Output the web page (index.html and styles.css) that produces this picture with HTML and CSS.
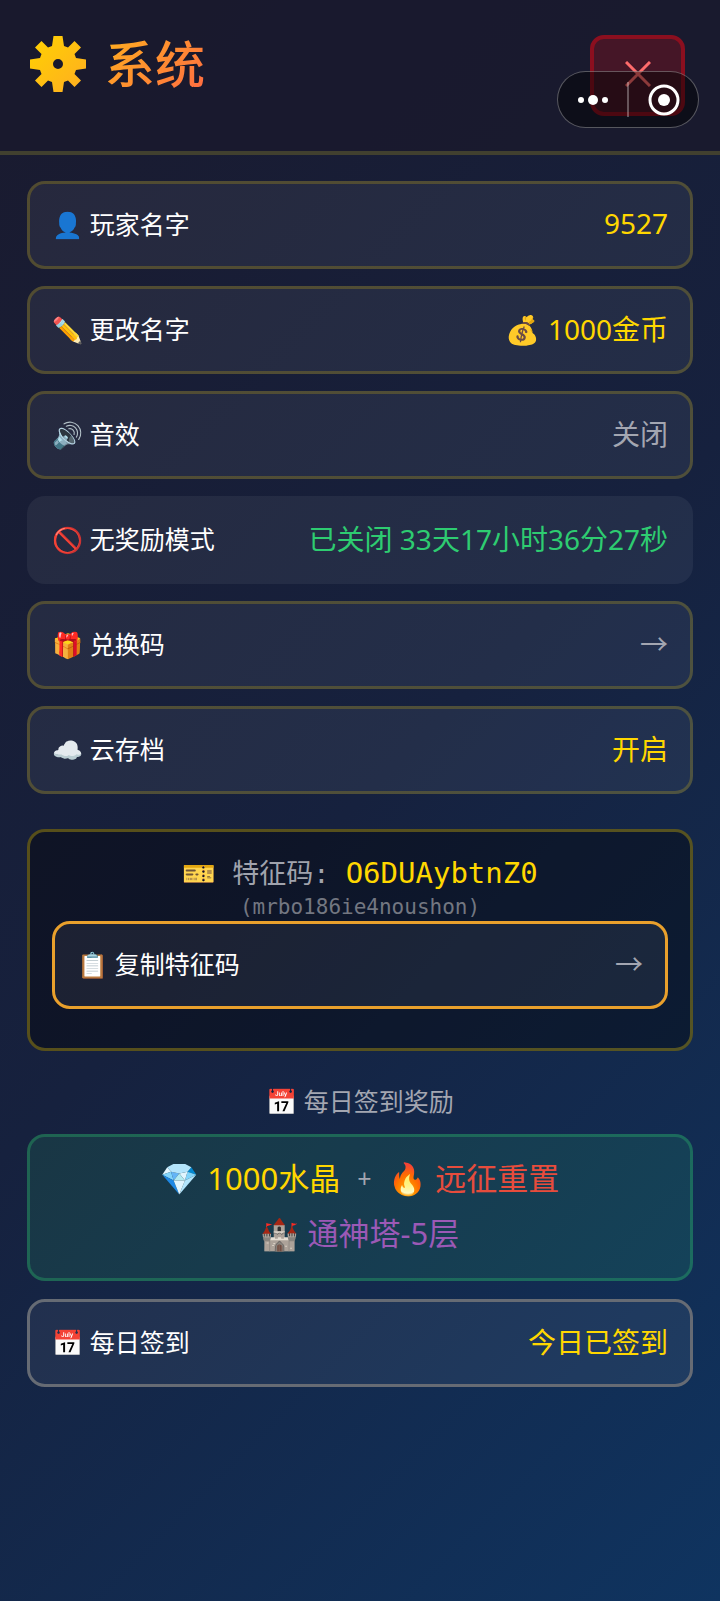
FILE: index.html
```
<!DOCTYPE html>
<html lang="zh-CN">
<head>
  <meta charset="UTF-8">
  <meta name="viewport" content="width=device-width, initial-scale=1.0">
  <title>系统</title>
  <link rel="stylesheet" href="styles.css">
</head>
<body>
  <header class="header">
    <h1 class="title">
      <svg class="gear" viewBox="-29 -29 58 58" aria-hidden="true">
        <defs>
          <linearGradient id="gold" x1="0" y1="0" x2="1" y2="1">
            <stop offset="0" stop-color="#ffd200"/>
            <stop offset="1" stop-color="#ffad22"/>
          </linearGradient>
        </defs>
        <path fill="url(#gold)" fill-rule="evenodd" d="M-4.5-28H4.5L6-18L10-16.500L16.500-23L23-16.500L16.500-10L18-6L28-4.500V4.500L18 6L16.500 10L23 16.500L16.500 23L10 16.500L6 18L4.500 28H-4.500L-6 18L-10 16.500L-16.500 23L-23 16.500L-16.500 10L-18 6L-28 4.500V-4.500L-18-6L-16.500-10L-23-16.500L-16.500-23L-10-16.500L-6-18ZM0-5A5 5 0 1 0 0 5A5 5 0 1 0 0-5Z"/>
      </svg>
      <span class="title-text">系统</span>
    </h1>
    <button class="close-btn" type="button" aria-label="关闭">
      <svg viewBox="0 0 26 26" width="26" height="26"><path d="M1 1L25 25M25 1L1 25" fill="none" stroke="#ff6b6b" stroke-width="3"/></svg>
    </button>
    <div class="capsule">
      <button type="button" aria-label="更多">
        <svg viewBox="0 0 30 12" width="30" height="12" fill="#fff"><circle cx="3" cy="6" r="3"/><circle cx="15" cy="6" r="5"/><circle cx="27" cy="6" r="3"/></svg>
      </button>
      <span class="divider"></span>
      <button type="button" aria-label="退出">
        <svg viewBox="0 0 32 32" width="32" height="32"><circle cx="16" cy="16" r="14" fill="none" stroke="#fff" stroke-width="3"/><circle cx="16" cy="16" r="6" fill="#fff"/></svg>
      </button>
    </div>
  </header>

  <main class="content">
    <div class="item">
      <span class="label">👤 玩家名字</span>
      <span class="value">9527</span>
    </div>
    <button class="item" type="button">
      <span class="label">✏️ 更改名字</span>
      <span class="value">💰 1000金币</span>
    </button>
    <button class="item" type="button">
      <span class="label">🔊 音效</span>
      <span class="value off">关闭</span>
    </button>
    <div class="item plain">
      <span class="label">🚫 无奖励模式</span>
      <span class="value green">已关闭 33天17小时36分27秒</span>
    </div>
    <button class="item" type="button">
      <span class="label">🎁 兑换码</span>
      <span class="value off">→</span>
    </button>
    <button class="item" type="button">
      <span class="label">☁️ 云存档</span>
      <span class="value">开启</span>
    </button>

    <section class="code-card">
      <div class="code">🎫 特征码: <span class="code-value">O6DUAybtnZ0</span></div>
      <div class="code-sub">(mrbo186ie4noushon)</div>
      <button class="item copy" type="button">
        <span class="label">📋 复制特征码</span>
        <span class="value off">→</span>
      </button>
    </section>

    <h2 class="sub-title">📅 每日签到奖励</h2>
    <section class="reward">
      <div class="reward-line">
        <span class="crystal">💎 1000水晶</span>
        <span class="plus">+</span>
        <span class="reset">🔥 远征重置</span>
      </div>
      <div class="reward-line">
        <span class="tower">🏰 通神塔-5层</span>
      </div>
    </section>
    <button class="item signed" type="button">
      <span class="label">📅 每日签到</span>
      <span class="value">今日已签到</span>
    </button>
  </main>
</body>
</html>
```
FILE: styles.css
```
* {
  box-sizing: border-box;
}
body {
  margin: 0;
  min-height: 100vh;
  font-family: "Noto Sans", "Noto Sans CJK SC", "Noto Color Emoji", sans-serif;
  color: #fff;
  background: linear-gradient(135deg, #1a1a2e 0%, #16213e 50%, #0f3460 100%);
}
button {
  font-family: inherit;
  color: inherit;
  cursor: pointer;
}
.header {
  position: relative;
  display: flex;
  justify-content: space-between;
  align-items: flex-start;
  padding: 35px 35px 35px 29px;
  background: rgba(26, 26, 46, 0.9);
  border-bottom: 4px solid #41402f;
}
.title {
  display: flex;
  align-items: center;
  gap: 18px;
  margin: 0;
  font-size: 50px;
  font-weight: 500;
  line-height: 56px;
}
.gear {
  width: 58px;
  height: 58px;
}
.title-text {
  color: transparent;
  background: linear-gradient(135deg, #ffb01f 0%, #ff6b42 100%);
  -webkit-background-clip: text;
  background-clip: text;
}
.close-btn {
  display: flex;
  justify-content: center;
  align-items: center;
  width: 95px;
  height: 81px;
  padding: 0 0 4px;
  border: 4px solid #8b0f1f;
  border-radius: 14px;
  background: #451627;
}
.capsule {
  position: absolute;
  top: 71px;
  right: 21px;
  display: flex;
  align-items: center;
  width: 142px;
  height: 57px;
  border: 1px solid rgba(255, 255, 255, 0.3);
  border-radius: 29px;
  background: rgba(0, 0, 0, 0.45);
}
.capsule button {
  flex: 1;
  display: flex;
  justify-content: center;
  padding: 0;
  border: none;
  background: none;
}
.divider {
  width: 2px;
  height: 35px;
  background: rgba(255, 255, 255, 0.3);
}
.content {
  padding: 26px 27px;
}
.item {
  display: flex;
  justify-content: space-between;
  align-items: center;
  width: 100%;
  height: 88px;
  margin-bottom: 17px;
  padding: 0 22px 4px;
  border: 3px solid rgba(255, 215, 0, 0.2);
  border-radius: 18px;
  background: rgba(255, 255, 255, 0.06);
}
.plain {
  border-color: transparent;
}
.label {
  font-size: 25px;
}
.value {
  font-size: 28px;
  color: #ffd700;
}
.off {
  color: #a3a6b1;
}
.green {
  color: #2ecc71;
}
.code-card {
  margin-top: 35px;
  padding: 22px;
  border: 3px solid rgba(255, 215, 0, 0.3);
  border-radius: 18px;
  background: rgba(0, 0, 0, 0.35);
  text-align: center;
  font-family: "DejaVu Sans Mono", "Noto Sans CJK SC", "Noto Color Emoji", monospace;
}
.code {
  font-size: 27px;
  line-height: 39px;
  color: #a0a3ad;
}
.code-value {
  font-size: 29px;
  color: #ffd700;
}
.code-sub {
  font-size: 21px;
  line-height: 28px;
  color: #737781;
}
.copy {
  border-color: #e9a02c;
  font-family: "Noto Sans", "Noto Sans CJK SC", "Noto Color Emoji", sans-serif;
}
.sub-title {
  margin: 33px 0 15px;
  font-size: 25px;
  font-weight: 400;
  line-height: 35px;
  text-align: center;
  color: #a3a6b1;
}
.reward {
  margin-bottom: 18px;
  padding: 14px 14px 17px;
  border: 3px solid rgba(46, 204, 113, 0.3);
  border-radius: 18px;
  background: rgba(46, 204, 113, 0.13);
}
.reward-line {
  display: flex;
  justify-content: center;
  align-items: center;
  gap: 17px;
  font-size: 31px;
  line-height: 55px;
}
.crystal {
  color: #ffd700;
}
.plus {
  font-size: 25px;
  color: #a3a6b1;
}
.reset {
  color: #e74c3c;
}
.tower {
  color: #9b59b6;
}
.signed {
  border-color: #666b74;
}
```
